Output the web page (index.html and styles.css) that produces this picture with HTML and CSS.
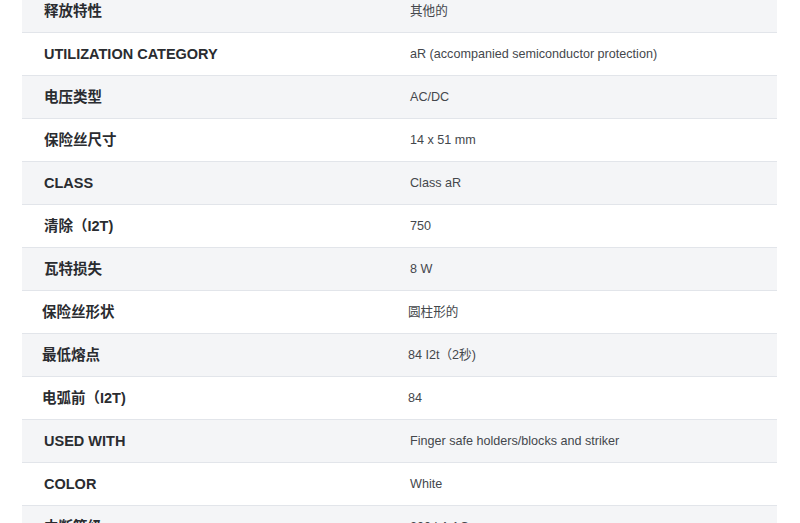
FILE: index.html
```html
<!DOCTYPE html>
<html lang="zh">
<head>
<meta charset="utf-8">
<title>Specs</title>
<link rel="stylesheet" href="styles.css">
</head>
<body>
<div class="spec-table">
  <div class="row alt"><div class="label">释放特性</div><div class="value">其他的</div></div>
  <div class="row"><div class="label">UTILIZATION CATEGORY</div><div class="value">aR (accompanied semiconductor protection)</div></div>
  <div class="row alt"><div class="label">电压类型</div><div class="value">AC/DC</div></div>
  <div class="row"><div class="label">保险丝尺寸</div><div class="value">14 x 51 mm</div></div>
  <div class="row alt"><div class="label">CLASS</div><div class="value">Class aR</div></div>
  <div class="row"><div class="label">清除（I2T)</div><div class="value">750</div></div>
  <div class="row alt"><div class="label">瓦特损失</div><div class="value">8 W</div></div>
  <div class="row shift"><div class="label">保险丝形状</div><div class="value">圆柱形的</div></div>
  <div class="row alt shift"><div class="label">最低熔点</div><div class="value">84 I2t（2秒)</div></div>
  <div class="row shift"><div class="label">电弧前（I2T)</div><div class="value">84</div></div>
  <div class="row alt"><div class="label">USED WITH</div><div class="value">Finger safe holders/blocks and striker</div></div>
  <div class="row"><div class="label">COLOR</div><div class="value">White</div></div>
  <div class="row alt"><div class="label">中断等级</div><div class="value">200 kA AC</div></div>
</div>
</body>
</html>
```
FILE: styles.css
```css
html, body {
  margin: 0;
  padding: 0;
  background: #ffffff;
}
body {
  font-family: "Liberation Sans", Arial, "Noto Sans CJK SC", sans-serif;
  overflow: hidden;
}
.spec-table {
  margin: -10px 0 0 22px;
  width: 755px;
}
.row {
  display: grid;
  grid-template-columns: 388px 1fr;
  align-items: center;
  height: 42px;
  border-bottom: 1px solid #e2e5ea;
  background: #ffffff;
}
.row.alt {
  background: #f4f5f7;
}
.label {
  padding-left: 22px;
  font-size: 14.5px;
  line-height: 1;
  font-weight: bold;
  color: #2a2c30;
}
.value {
  font-size: 12.6px;
  line-height: 1;
  color: #44474c;
}
.row.shift .label {
  padding-left: 20px;
}
.row.shift .value {
  margin-left: -2px;
}
```
